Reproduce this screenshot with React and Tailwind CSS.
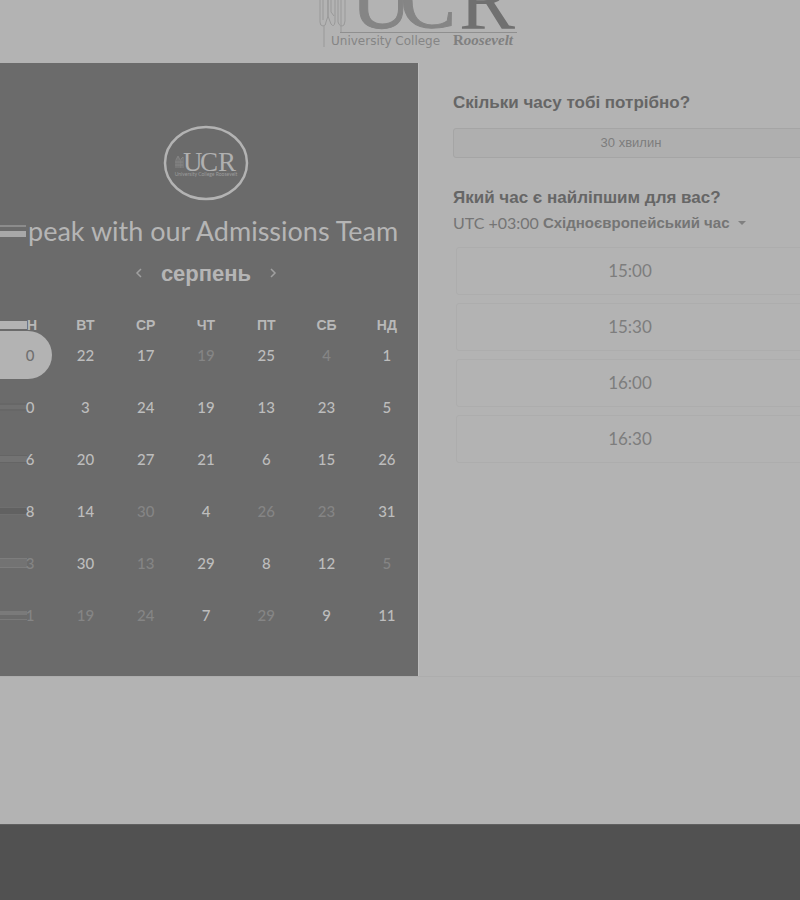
import React from "react";

const weekdays = ["Н", "ВТ", "СР", "ЧТ", "ПТ", "СБ", "НД"];

// A leading "-" marks a day that cannot be booked.
const weeks = [
  ["0", "22", "17", "-19", "25", "-4", "1"],
  ["0", "3", "24", "19", "13", "23", "5"],
  ["6", "20", "27", "21", "6", "15", "26"],
  ["8", "14", "-30", "4", "-26", "-23", "31"],
  ["-3", "30", "-13", "29", "8", "12", "-5"],
  ["-1", "-19", "-24", "7", "-29", "9", "11"],
];

// Horizontal streaks running from the left edge up to the first column.
const streaks = [
  "h-0",
  "h-2 border-y-2 border-[#676767] bg-[#707070]",
  "h-2 border-y border-[#656565] bg-[#737373]",
  "h-2 border-y border-[#6f6f6f] bg-[#616161]",
  "h-[10px] border-y border-[#7d7d7d] bg-[#737373]",
  "h-[9px] border-t-4 border-b border-[#7a7a7a] bg-[#6b6b6b]",
];

const times = ["15:00", "15:30", "16:00", "16:30"];

function HeaderLogo() {
  return (
    <svg width="200" height="52" viewBox="318 0 200 52" role="img" aria-label="University College Roosevelt">
      <g fill="none" stroke="#999" strokeWidth="1">
        <path d="M320 0v22q0 4 3 4t3-4l2-6V0M324 26v21" />
        <path d="M323 0v20M328 0v16l3 8q3 4 4-2V0M331 0v12l3 4M338 0v22q2 6 6 3l1-4V0M341 0v32" />
      </g>
      <path d="M340 32.500H517" stroke="#8f8f8f" strokeWidth="1" />
      <g fontFamily="'Liberation Serif', serif" fontSize="84">
        <text x="351" y="28" fill="#858585" stroke="#858585" strokeWidth="1">U</text>
        <text x="400" y="28" fill="#858585" stroke="#858585" strokeWidth="1">C</text>
        <text x="459" y="29" fill="#707070">R</text>
      </g>
      <text x="331" y="45" fontSize="12" fill="#858585" fontFamily="'DejaVu Sans', sans-serif">University College</text>
      <text x="453" y="45" fontSize="15" fill="#808080" fontWeight="bold" fontFamily="'Liberation Serif', serif">
        R<tspan fontStyle="italic">oosevelt</tspan>
      </text>
    </svg>
  );
}

function RoundLogo() {
  return (
    <svg width="86" height="76" viewBox="0 0 86 76" role="img" aria-label="UCR" className="mx-auto block">
      <ellipse cx="43" cy="38" rx="41" ry="36" fill="none" stroke="#b3b3b3" strokeWidth="2.500" />
      <path d="M13 43v-8l2-4 2 4v8M15 32v11M18 43v-9l2-2v11M12 40h8M12 37h8" fill="none" stroke="#858585" strokeWidth="1" />
      <g fontFamily="'Liberation Serif', serif" fontSize="27" fill="#b0b0b0">
        <text x="20" y="46">U</text>
        <text x="37" y="46">C</text>
        <text x="55" y="46">R</text>
      </g>
      <text x="43" y="51" textAnchor="middle" fontSize="5" fill="#9c9c9c" fontFamily="Lato, sans-serif">University College Roosevelt</text>
    </svg>
  );
}

function Chevron({ d }) {
  return (
    <svg width="8" height="10" viewBox="0 0 8 10" fill="none" stroke="#a0a0a0" strokeWidth="1.500">
      <path d={d} />
    </svg>
  );
}

function Day({ value, row, col }) {
  const disabled = value.startsWith("-");
  const label = value.replace("-", "");
  const selected = row === 0 && col === 0;
  const tone = selected ? "text-[#707070]" : disabled ? "text-[#858585]" : "text-[#bdbdbd]";
  return (
    <td className="h-[52px] p-0">
      {col === 0 ? (
        <div className="relative flex h-12 items-center">
          <div className={selected ? "absolute inset-y-0 left-0 w-[57px] rounded-r-full bg-[#b3b3b3]" : "absolute left-0 w-8 " + streaks[row]} />
          <button disabled={disabled} className={"relative w-full pl-[10px] text-center " + tone}>{label}</button>
        </div>
      ) : (
        <button disabled={disabled} className={"h-12 w-full text-center " + tone}>{label}</button>
      )}
    </td>
  );
}

export default function App() {
  return (
    <div className="flex min-h-screen flex-col overflow-hidden bg-[#b3b3b3] font-['Lato','Liberation_Sans',sans-serif]">
      <header className="flex h-[63px] justify-center pl-9">
        <HeaderLogo />
      </header>

      <main className="flex border-b border-[#adadad]">
        <section className="w-[419px] shrink-0 overflow-hidden border-r border-[#bdbdbd] bg-[#6b6b6b] pt-[62px] pb-[35px]">
          <div className="pr-1.5">
            <RoundLogo />
          </div>
          <h1 className="mt-3 flex h-9 items-center text-[27px] whitespace-nowrap text-[#b5b5b5]">
            <span className="mr-[2px] flex w-[26px] flex-col gap-1">
              <span className="h-[2px] bg-[#8c8c8c]" />
              <span className="h-[6px] bg-[#a8a8a8]" />
            </span>
            peak with our Admissions Team
          </h1>
          <div className="mt-2 flex h-8 items-center justify-center gap-[18px] pr-1.5">
            <button aria-label="Попередній місяць"><Chevron d="M6 1 2 5l4 4" /></button>
            <h2 className="font-['Liberation_Sans',sans-serif] text-[22px] font-bold text-[#b5b5b5]">серпень</h2>
            <button aria-label="Наступний місяць"><Chevron d="m2 1 4 4-4 4" /></button>
          </div>
          <table className="mt-8 -ml-[5px] w-[422px] table-fixed border-collapse text-[15px] font-medium">
            <thead className="font-['Liberation_Sans',sans-serif] text-[14px] leading-[8px] text-[#b8b8b8]">
              <tr>
                {weekdays.map((day, i) => (
                  <th key={day} scope="col" className="p-0">
                    {i === 0 ? (
                      <span className="flex items-center">
                        <span className="h-2 w-8 bg-[#b3b3b3]" />
                        <span>{day}</span>
                      </span>
                    ) : day}
                  </th>
                ))}
              </tr>
            </thead>
            <tbody>
              {weeks.map((week, row) => (
                <tr key={row}>
                  {week.map((value, col) => <Day key={col} value={value} row={row} col={col} />)}
                </tr>
              ))}
            </tbody>
          </table>
        </section>

        <section className="-mr-[9px] grow pt-7 pl-[34px] text-[#666]">
          <h2 className="font-['Liberation_Sans',sans-serif] text-[17px] leading-6 font-bold">Скільки часу тобі потрібно?</h2>
          <button className="mt-[13px] h-[30px] w-full rounded-[3px] border border-[#a5a5a5] bg-[#afafaf] font-['Liberation_Sans',sans-serif] text-[13px] text-[#7d7d7d]">
            30 хвилин
          </button>
          <h2 className="mt-7 font-['Liberation_Sans',sans-serif] text-[17px] leading-6 font-bold">Який час є найліпшим для вас?</h2>
          <button className="flex h-[26px] items-center gap-1 text-[16px] whitespace-nowrap text-[#757575]">
            <span>UTC +03:00</span>
            <span className="font-['Liberation_Sans',sans-serif] text-[15px] font-bold">Східноєвропейський час</span>
            <svg width="8" height="4" viewBox="0 0 8 4" className="ml-1" fill="#808080"><path d="M0 0h8L4 4z" /></svg>
          </button>
          <div className="mt-[11px] mr-[5px] ml-[3px] flex flex-col gap-2">
            {times.map((time) => (
              <button key={time} className="h-12 rounded-[3px] border border-[#adadad] text-[17px] text-[#7d7d7d]">{time}</button>
            ))}
          </div>
        </section>
      </main>

      <footer className="mt-[147px] min-h-[76px] grow border-t border-[#606060] bg-[#515151]" />
    </div>
  );
}
